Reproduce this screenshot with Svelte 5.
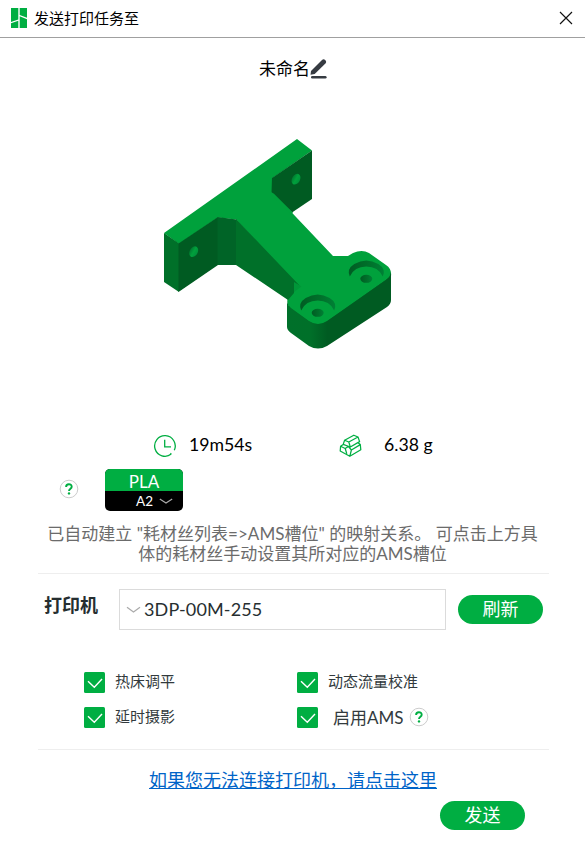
<script>
  let leftOptions = $state([
    { label: '热床调平', checked: true },
    { label: '延时摄影', checked: true }
  ]);
  let rightOptions = $state([
    { label: '动态流量校准', checked: true },
    { label: '启用AMS', checked: true, large: true, help: true }
  ]);
  const bores = [[317.7, 306], [366.3, 272]];
</script>

{#snippet help()}
  <svg class="help" width="20" height="20" viewBox="0 0 20 20">
    <circle cx="10" cy="10" r="8.8" fill="#fff" stroke="#ccc" />
    <path d="M7.1 7.9C7.1 4.4 12.7 4.4 12.7 7.7C12.7 9.7 10 9.7 10 12" fill="none" stroke="#00ae42" stroke-width="1.9" />
    <circle cx="10" cy="14.4" r="1.2" fill="#00ae42" />
  </svg>
{/snippet}

{#snippet option(item)}
  <label class:large={item.large}>
    <input type="checkbox" bind:checked={item.checked} />
    <svg width="21" height="21" viewBox="0 0 21 21">
      <rect width="21" height="21" rx="1.5" fill="#00ae42" />
      {#if item.checked}<path d="M4 9.2L10.3 15.2L18 7" fill="none" stroke="#fff" stroke-width="1.4" />{/if}
    </svg>
    <span>{item.label}</span>
    {#if item.help}{@render help()}{/if}
  </label>
{/snippet}

<main>
  <header>
    <svg width="16" height="20" viewBox="0 0 16 20">
      <path d="M0 0H7.3V11.5L0 14ZM8.7 0H16V9.8L8.7 7ZM0 15.2L7.3 12.7V20H0ZM8.7 8.3L16 11.2V20H8.7Z" fill="#00ae42" />
    </svg>
    <h1>发送打印任务至</h1>
    <button class="close" aria-label="关闭">
      <svg width="14" height="14" viewBox="0 0 14 14"><path d="M1 1L13 13M13 1L1 13" stroke="#111" stroke-width="1.15" /></svg>
    </button>
  </header>

  <div class="name">
    <span>未命名</span>
    <svg width="18" height="20" viewBox="0 0 18 20">
      <path d="M1 12L12 1Q13.7 -.4 15.4 1.3Q16.8 2.9 15.4 4.4L4.7 14.9L.5 15.8Z" fill="#363b42" />
      <path d="M2.3 18.2H15.3" stroke="#363b42" stroke-width="2.6" stroke-linecap="round" />
    </svg>
  </div>

  <svg class="model" width="240" height="220" viewBox="158 134 240 220">
    <defs>
      <linearGradient id="plate" gradientUnits="userSpaceOnUse" x1="287" y1="0" x2="391" y2="0">
        <stop offset="0" stop-color="#00702a" /><stop offset=".22" stop-color="#007029" />
        <stop offset=".39" stop-color="#005b22" /><stop offset="1" stop-color="#005b22" />
      </linearGradient>
      <linearGradient id="hole"><stop offset="0" stop-color="#007a30" /><stop offset=".5" stop-color="#00a13c" /><stop offset="1" stop-color="#00903a" /></linearGradient>
      <linearGradient id="bore"><stop offset="0" stop-color="#005c23" /><stop offset=".55" stop-color="#006f2a" /><stop offset="1" stop-color="#008035" /></linearGradient>
    </defs>
    <path d="M164.5 234L179 244L218 217.5L236 220L300 287L308 320L318 324L327 320L390 276L389 295L318 346L289 328V299L236 264H218L179 291L164.5 281Z" fill="#007029" />
    <path d="M164 233L297 139L312 150.5L272 178.5V193L291.5 212.3L333 256H348L353 253Q362 249 369 253L386 265Q392 269 391 276L327 321.5Q318 327.5 309 321.5L290 308Q286 303 288 298L294.5 291V283L236 219.5L218 217.5L179 244Z" fill="#00a13c" />
    <path d="M164 233L179 243.5V292L164 282Z" fill="#007029" />
    <path d="M178.5 243.5L218 217V265L178.5 292Z" fill="#005b22" />
    <path d="M217.5 217L236.5 219.5V265H217.5Z" fill="#006427" />
    <path d="M236 219L300 286L294 283V293L288 300L236 265Z" fill="#007029" />
    <path d="M294 282L301.5 286.5L294 292Z" fill="#009638" />
    <path d="M272 178L312 150.5V199L292 212.5L271.5 193Z" fill="#005b22" />
    <path d="M271 192L274 193.8L293 212.8L291 214.5L270 194Z" fill="#00a13c" />
    <path d="M287 299Q287 305 291 308L309 321Q318 327 327 321L386 280Q391 276 391 271V300Q391 304 387 307L327 346Q318 351 309 346L291 333Q287 330 287 327Z" fill="url(#plate)" />
    <ellipse cx="193.7" cy="251.7" rx="4" ry="5.7" transform="rotate(30 193.7 251.7)" fill="url(#hole)" />
    <ellipse cx="296" cy="179.2" rx="4" ry="5.7" transform="rotate(30 296 179.2)" fill="url(#hole)" />
    {#each bores as [x, y]}
      <path d={`M${x - 16.5} ${y + 4.5}Q${x - 20} ${y - 3} ${x - 12} ${y - 8}Q${x} ${y - 15} ${x + 12} ${y - 8}Q${x + 20} ${y - 3} ${x + 16.5} ${y + 4.5}Q${x + 12} ${y - 5.5} ${x} ${y - 5.5}Q${x - 12} ${y - 5.5} ${x - 16.5} ${y + 4.5}Z`} fill="url(#bore)" />
      <ellipse cx={x} cy={y + 6.8} rx="6" ry="4" fill="url(#bore)" />
    {/each}
  </svg>

  <div class="stats">
    <svg class="clock" width="24" height="24" viewBox="0 0 24 24" fill="none" stroke="#00ae42" stroke-width="1.3">
      <path d="M18.3 20.1A10.3 10.3 0 1 1 21.3 16.3M18.3 20.1L17.4 19.2M11.7 5.7V12.8H18" />
    </svg>
    <span class="time">19m54s</span>
    <svg class="material" width="24" height="24" viewBox="0 0 24 24" fill="none" stroke="#00ae42" stroke-width="1.25" stroke-linejoin="round">
      <path d="M5.6 6.2L9.8 8L11.3 13L4.2 10.4ZM5.6 6.2L14.8 1.2L19 3L9.8 8M19 3L20.6 7.6L11.3 13M4.2 10.4L1.6 12.3L1.2 17L10.8 22.3L21.8 15.7L21.3 10.6L19 8.7M1.6 12.3L6.2 14.5L9.3 12.4M6.2 14.5L7.8 19.8M9.3 12.4L12.4 16L21.3 10.6M12.4 16L10.8 22.3" />
    </svg>
    <span class="weight">6.38 g</span>
  </div>

  <div class="filament">
    {@render help()}
    <button class="slot">
      <span class="type">PLA</span>
      <span class="tray">A2<svg width="14" height="7" viewBox="0 0 14 7"><path d="M.8 1L7 5L13.2 1" fill="none" stroke="#aaa" stroke-width="1.2" /></svg></span>
    </button>
  </div>

  <p class="tip"><span class="t1">已自动建立 "耗材丝列表=&gt;AMS槽位" 的映射关系。 可点击上方具</span><br /><span class="t2">体的耗材丝手动设置其所对应的AMS槽位</span></p>

  <div class="printer">
    <b>打印机</b>
    <button class="select">
      <svg width="15" height="8" viewBox="0 0 15 8"><path d="M1 1.3L7.5 6L14 1.3" fill="none" stroke="#aaa" stroke-width="1.2" /></svg>
      <span>3DP-00M-255</span>
    </button>
    <button class="pill">刷新</button>
  </div>

  <div class="options">
    <div>{#each leftOptions as item}{@render option(item)}{/each}</div>
    <div>{#each rightOptions as item}{@render option(item)}{/each}</div>
  </div>

  <div class="link"><a href="#help">如果您无法连接打印机，请点击这里</a></div>
  <footer><button class="pill">发送</button></footer>
</main>

<style>
  :global(body) { background: #fff; overflow: hidden; }
  main { width: 585px; height: 852px; display: flex; flex-direction: column; background: #fff; color: #000; font-family: Lato, "Noto Sans CJK SC", sans-serif; white-space: nowrap; }
  main *, main { box-sizing: border-box; }
  svg { display: block; flex: none; }
  button { border: 0; padding: 0; background: none; font: inherit; color: inherit; }
  header { height: 38px; flex: none; display: flex; align-items: center; padding: 0 12px 2px 11px; border-bottom: 1px solid #a0a0a0; }
  h1 { margin: 0 auto 0 7px; font-size: 15px; line-height: 20px; font-weight: 400; }
  .name { height: 62px; flex: none; display: flex; align-items: center; justify-content: center; padding-left: 2px; font-size: 17px; }
  .name span { padding-bottom: 4px; }
  .model { margin: 34px 0 0 158px; }
  .stats { margin-top: 79px; height: 26px; display: flex; align-items: center; padding-left: 153px; font-size: 17.7px; }
  .stats span { padding-bottom: 3px; }
  .time { width: 62px; margin-left: 12px; }
  .material { margin-left: 88px; }
  .weight { margin-left: 21px; }
  .filament { height: 42px; margin-top: 10px; display: flex; align-items: center; padding-left: 59px; }
  .filament > :global(.help) { margin-bottom: 2px; }
  .slot { margin-left: 26px; width: 78px; height: 42px; border-radius: 5px; overflow: hidden; display: flex; flex-direction: column; color: #fff; background: #000; }
  .type { width: 100%; height: 22px; background: #00ae42; font-size: 17px; line-height: 25px; text-align: center; }
  .tray { height: 20px; display: flex; align-items: center; padding-left: 31px; font-size: 13.5px; }
  .tray svg { margin-left: 6px; }
  .tip { height: 63px; margin: 0 36px 0 38px; padding-top: 13px; border-bottom: 1px solid #eee; color: #6b6b6b; text-align: center; font-size: 17px; line-height: 20px; }
  .t1 { margin-left: -2px; letter-spacing: .02px; }
  .t2 { margin-left: -2px; }
  .printer { height: 41px; margin-top: 15px; display: flex; align-items: center; padding-left: 44px; color: #262e30; font-size: 18px; }
  .printer b { width: 75px; margin-top: -12px; }
  .select { width: 327px; height: 41px; border: 1px solid #dbdbdb; display: flex; align-items: center; padding-left: 6px; }
  .select span { margin-left: 3px; padding-bottom: 2px; letter-spacing: .15px; }
  .pill { width: 85px; height: 29px; border-radius: 15px; background: #00ae42; color: #fff; font-size: 18px; line-height: 29px; }
  .printer .pill { margin-left: 12px; }
  .options { height: 120px; margin: 0 36px 0 38px; padding: 42px 0 0 46px; display: flex; border-bottom: 1px solid #eee; color: #323a3d; font-size: 15px; }
  .options > div { width: 213px; display: flex; flex-direction: column; gap: 14px; }
  label { display: flex; align-items: center; height: 21px; }
  input { display: none; }
  label span { margin-left: 10px; padding-bottom: 5px; }
  .large { font-size: 17px; }
  .large span { margin-left: 15px; padding-bottom: 3px; }
  .large .help { margin: 0 0 2px 5px; }
  .link { height: 51px; display: flex; justify-content: center; padding: 17px 0 0 1px; }
  a { color: #0064c8; font-size: 18px; line-height: 27px; text-decoration: underline; }
  footer { display: flex; justify-content: flex-end; padding-right: 60px; }
</style>
